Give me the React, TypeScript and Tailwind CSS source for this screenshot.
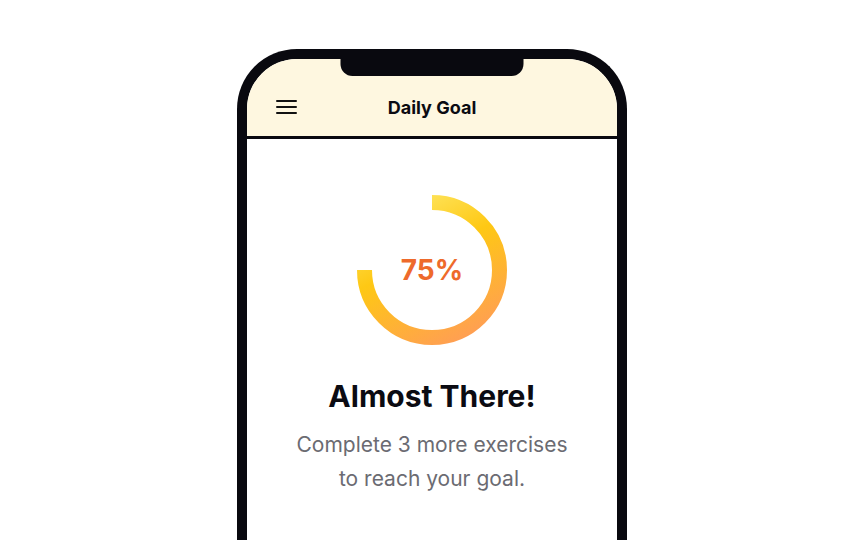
import React from 'react';

function Ring({ percent }: { percent: number }) {
  // 75% arc drawn clockwise from 12 o'clock to 9 o'clock
  return (
    <div className="relative h-[150px] w-[150px]">
      <svg width="150" height="150" viewBox="0 0 150 150">
        <defs>
          <linearGradient id="ringGrad" x1="0.25" y1="0" x2="0.75" y2="1">
            <stop offset="0%" stopColor="#fee55e" />
            <stop offset="40%" stopColor="#fec814" />
            <stop offset="100%" stopColor="#ff9f52" />
          </linearGradient>
        </defs>
        <path d="M75 7.5 A67.5 67.5 0 1 1 7.5 75" fill="none" stroke="url(#ringGrad)" strokeWidth="15" />
      </svg>
      <div className="absolute inset-0 flex items-center justify-center">
        <span className="text-[28px] font-bold text-[#ee6a2b]">{percent}%</span>
      </div>
    </div>
  );
}

export default function App() {
  return (
    <div className="flex h-[540px] w-[864px] justify-center overflow-hidden bg-white pt-[49px] font-['Inter',sans-serif]">
      <div className="flex h-[520px] w-[390px] flex-col overflow-hidden rounded-t-[60px] border-[10px] border-b-0 border-[#09090f] bg-white">
        <header className="relative flex h-[80px] shrink-0 items-end border-b-[3px] border-[#09090f] bg-[#fef7e0] px-[29px] pb-[16px]">
          {/* notch */}
          <div className="absolute left-1/2 top-0 h-[17px] w-[183px] -translate-x-1/2 rounded-b-[12px] bg-[#09090f]" />
          <div className="mb-[6px] flex w-[21px] flex-col gap-[4px]">
            <span className="h-[2px] w-full rounded bg-[#111]" />
            <span className="h-[2px] w-full rounded bg-[#111]" />
            <span className="h-[2px] w-full rounded bg-[#111]" />
          </div>
          <h1 className="flex-1 text-center text-[18px] font-bold leading-[24px] text-[#0b0b12]">Daily Goal</h1>
          <div className="w-[21px]" />
        </header>
        <main className="flex flex-col items-center pt-[56px]">
          <Ring percent={75} />
          <h2 className="mt-[34px] text-[30px] font-bold leading-[34px] text-[#0b0b12]">Almost There!</h2>
          <p className="mt-[15px] text-center text-[21px] leading-[34px] text-[#6b6b72]">
            Complete 3 more exercises
            <br />
            to reach your goal.
          </p>
        </main>
      </div>
    </div>
  );
}
